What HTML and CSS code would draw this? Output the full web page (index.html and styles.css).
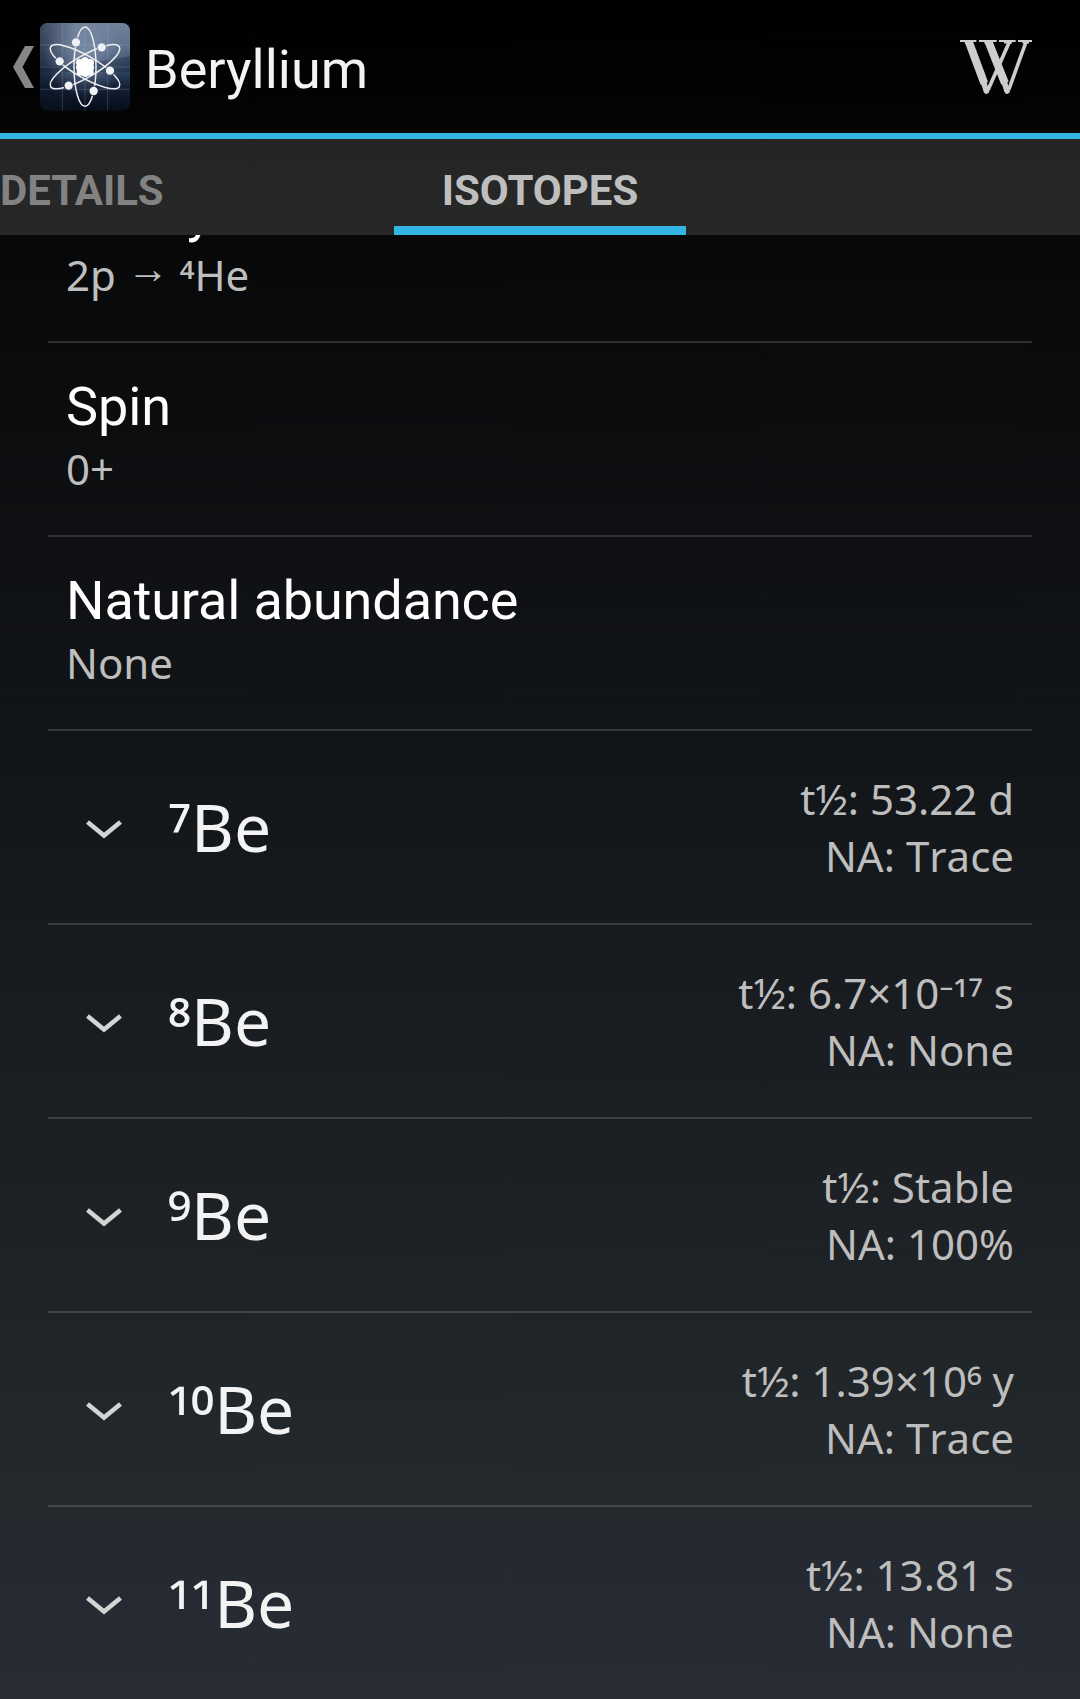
FILE: index.html
```html
<!DOCTYPE html>
<html lang="en">
<head>
<meta charset="utf-8">
<title>Beryllium</title>
<link rel="stylesheet" href="styles.css">
</head>
<body>
<div class="screen">
  <header class="action-bar">
    <svg class="up" width="21" height="42" viewBox="0 0 21 42"><path d="M12 0H21L9.500 21L21 42H12L0 21Z" fill="#868686"/></svg>
    <svg class="app-icon" width="90" height="88" viewBox="30 24 270 264">
      <defs>
        <linearGradient id="sky" x1="0" y1="0" x2="0" y2="1">
          <stop offset="0" stop-color="#71839c"/>
          <stop offset=".3" stop-color="#5b6d89"/>
          <stop offset=".55" stop-color="#2f425e"/>
          <stop offset=".72" stop-color="#142239"/>
          <stop offset="1" stop-color="#070c17"/>
        </linearGradient>
        <radialGradient id="glow" cx=".5" cy=".4" r=".45">
          <stop offset="0" stop-color="#a6b6cf" stop-opacity=".45"/>
          <stop offset="1" stop-color="#a6b6cf" stop-opacity="0"/>
        </radialGradient>
        <linearGradient id="shade" x1="0" y1="0" x2="1" y2="0">
          <stop offset="0" stop-color="#0a1220" stop-opacity=".5"/>
          <stop offset=".4" stop-color="#0a1220" stop-opacity="0"/>
        </linearGradient>
        <mask id="gaps" maskUnits="userSpaceOnUse" x="30" y="24" width="270" height="264">
          <rect x="30" y="24" width="270" height="264" fill="#fff"/>
          <g fill="#000"><circle cx="138" cy="82" r="15"/><circle cx="215" cy="97" r="15"/><circle cx="89" cy="139" r="15"/><circle cx="240" cy="167" r="15"/><circle cx="116" cy="212" r="15"/><circle cx="191" cy="228" r="15"/></g>
        </mask>
      </defs>
      <rect x="30" y="24" width="270" height="263" rx="22" fill="url(#sky)"/>
      <rect x="30" y="24" width="270" height="263" rx="22" fill="url(#shade)"/>
      <rect x="30" y="24" width="270" height="263" rx="22" fill="url(#glow)"/>
      <path d="M30 152Q180 150 300 124V170H30Z" fill="#0d1a2e" opacity=".3"/>
      <path d="M97 24V287M165 24V287M233 24V287M30 90H300M30 156H300M30 223H300" stroke="#a9bdd8" stroke-opacity=".22" stroke-width="3"/>
      <g fill="none" stroke="#eceef1" stroke-width="4.500" mask="url(#gaps)">
        <ellipse cx="165" cy="155" rx="33" ry="119"/>
        <ellipse cx="165" cy="155" rx="33" ry="119" transform="rotate(60 165 155)"/>
        <ellipse cx="165" cy="155" rx="33" ry="119" transform="rotate(-60 165 155)"/>
      </g>
      <g fill="#f0f1f4">
        <circle cx="138" cy="82" r="12.500"/><circle cx="215" cy="97" r="12.500"/><circle cx="89" cy="139" r="12.500"/><circle cx="240" cy="167" r="12.500"/><circle cx="116" cy="212" r="12.500"/><circle cx="191" cy="228" r="12.500"/>
      </g>
      <g fill="#fff">
        <circle cx="165" cy="156" r="24"/><circle cx="165" cy="138" r="11"/><circle cx="149" cy="143" r="11"/><circle cx="181" cy="143" r="11"/><circle cx="148" cy="158" r="10"/><circle cx="182" cy="158" r="10"/><circle cx="151" cy="171" r="11"/><circle cx="180" cy="171" r="11"/><circle cx="166" cy="175" r="11"/>
      </g>
    </svg>
    <h1 class="title">Beryllium</h1>
    <svg class="wiki" width="72" height="54" viewBox="90 60 216 162" role="img" aria-label="Wikipedia">
      <g stroke="#cdcdcd">
        <g stroke-width="6"><line x1="90" y1="63" x2="139" y2="63"/><line x1="147" y1="63" x2="200" y2="63"/><line x1="207" y1="63" x2="257" y2="63"/><line x1="264" y1="63" x2="306" y2="63"/></g>
        <g stroke-width="7"><line x1="104" y1="67" x2="128" y2="67"/><line x1="163" y1="67" x2="187" y2="67"/><line x1="222" y1="67" x2="246" y2="67"/><line x1="277" y1="67" x2="297" y2="67"/></g>
        <g stroke-width="24"><line x1="116" y1="64" x2="163" y2="190"/><line x1="175" y1="64" x2="225" y2="190"/></g>
        <g stroke-width="17" stroke-linecap="round"><line x1="162" y1="190" x2="169" y2="213"/><line x1="224" y1="190" x2="231" y2="213"/></g>
        <g stroke-width="11"><line x1="238" y1="66" x2="174" y2="210"/><line x1="288" y1="66" x2="236" y2="210"/></g>
      </g>
    </svg>
  </header>
  <nav class="tabs">
    <span class="tab tab-prev">DETAILS</span>
    <span class="tab tab-current">ISOTOPES</span>
  </nav>
  <main class="list">
    <section class="row property"><h2>Decay modes</h2><p>2p <span class="arrow">→</span> <span class="sup">⁴</span>He</p></section>
    <section class="row property"><h2>Spin</h2><p>0+</p></section>
    <section class="row property"><h2>Natural abundance</h2><p>None</p></section>
    <section class="row isotope">
      <svg class="chevron" width="36" height="19" viewBox="0 0 36 19"><path d="M1.500 2L18 15.500L34.500 2" fill="none" stroke="#d3d5d5" stroke-width="4.500"/></svg>
      <h2><span class="sup">⁷</span>Be</h2><p>t½: 53.22 d<br>NA: Trace</p>
    </section>
    <section class="row isotope">
      <svg class="chevron" width="36" height="19" viewBox="0 0 36 19"><path d="M1.500 2L18 15.500L34.500 2" fill="none" stroke="#d3d5d5" stroke-width="4.500"/></svg>
      <h2><span class="sup">⁸</span>Be</h2><p>t½: 6.7×10<span class="sup">⁻¹⁷</span> s<br>NA: None</p>
    </section>
    <section class="row isotope">
      <svg class="chevron" width="36" height="19" viewBox="0 0 36 19"><path d="M1.500 2L18 15.500L34.500 2" fill="none" stroke="#d3d5d5" stroke-width="4.500"/></svg>
      <h2><span class="sup">⁹</span>Be</h2><p>t½: Stable<br>NA: 100%</p>
    </section>
    <section class="row isotope">
      <svg class="chevron" width="36" height="19" viewBox="0 0 36 19"><path d="M1.500 2L18 15.500L34.500 2" fill="none" stroke="#d3d5d5" stroke-width="4.500"/></svg>
      <h2><span class="sup">¹⁰</span>Be</h2><p>t½: 1.39×10<span class="sup">⁶</span> y<br>NA: Trace</p>
    </section>
    <section class="row isotope">
      <svg class="chevron" width="36" height="19" viewBox="0 0 36 19"><path d="M1.500 2L18 15.500L34.500 2" fill="none" stroke="#d3d5d5" stroke-width="4.500"/></svg>
      <h2><span class="sup">¹¹</span>Be</h2><p>t½: 13.81 s<br>NA: None</p>
    </section>
  </main>
</div>
</body>
</html>
```
FILE: styles.css
```css
* { box-sizing: border-box; }
body { margin: 0; background: #000; }
h1, h2, p { margin: 0; font-weight: 400; }

.screen {
  width: 1080px;
  height: 1699px;
  display: flex;
  flex-direction: column;
  overflow: hidden;
  background: linear-gradient(#000, #0a0b0d 20%, #121518 43%, #191c20 60%, #23292c 88%, #252a32 92%, #282c34);
  font-family: "Noto Sans", sans-serif;
}

.action-bar {
  flex: none;
  height: 139px;
  border-bottom: 6px solid #33b5e5;
  display: flex;
  align-items: center;
  padding: 0 48px 0 13px;
}
.up { flex: none; margin-right: 6px; }
.app-icon { flex: none; }
.title {
  flex: 1;
  margin-left: 15px;
  padding-top: 5px;
  font: 400 54px/63px Roboto, sans-serif;
  color: #f3f3f3;
}
.wiki { flex: none; }

.tabs {
  flex: none;
  height: 96px;
  display: grid;
  grid-template-columns: 394px 292px;
  background: rgba(255, 255, 255, .13);
}
.tab {
  padding-top: 27px;
  font: 700 42px/49px Roboto, sans-serif;
  color: #bebebe;
}
.tab-prev { color: #828282; letter-spacing: -.1px; }
.tab-current { text-align: center; border-bottom: 9px solid #33b5e5; }

.list {
  flex: 1;
  min-height: 0;
  overflow: hidden;
  display: flex;
  flex-direction: column;
  padding: 0 48px;
}
.row {
  flex: none;
  height: 194px;
  padding: 0 18px;
  border-bottom: 2px solid rgba(255, 255, 255, .15);
}
.row:first-child { margin-top: -86px; }
.row:last-child { border-bottom-color: transparent; }
.row p { font-size: 42px; line-height: 57px; color: #bebebe; font-kerning: none; }

/* Superscript figures hang from the cap height of the letters beside them. */
.sup { vertical-align: -.12em; line-height: 0; }
.arrow { vertical-align: .18em; line-height: 0; }

.property h2 {
  padding-top: 32px;
  font: 400 54px/63px Roboto, sans-serif;
  letter-spacing: -.12px;
  color: #fff;
}
.property p { padding-top: 2px; }

.isotope { display: flex; align-items: center; }
.isotope h2 {
  flex: 1;
  margin-left: 46px;
  padding-bottom: 2px;
  font-size: 66px;
  line-height: 90px;
  color: #f3f3f3;
}
.isotope p { text-align: right; }
.chevron { flex: none; margin-left: 20px; margin-top: 4px; }
```
